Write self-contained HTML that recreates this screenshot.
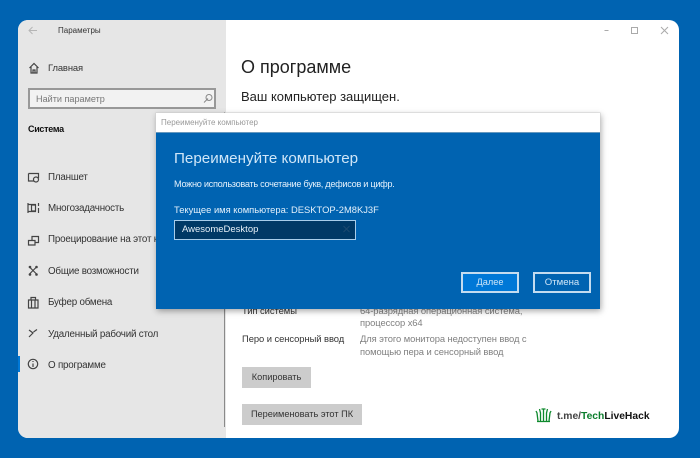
<!DOCTYPE html>
<html><head><meta charset="utf-8">
<style>
html,body{margin:0;padding:0;width:700px;height:458px;overflow:hidden;background:#0063b1}
body{position:relative;font-family:"Liberation Sans","DejaVu Sans",sans-serif}
#r{position:absolute;left:0;top:0;width:700px;height:458px;filter:blur(.3px);overflow:hidden}
div,span{position:absolute;white-space:nowrap}
svg{position:absolute;overflow:visible}
.n{font-size:9.8px;letter-spacing:-.2px;color:#333;left:48px;line-height:14px}
.i{fill:none;stroke:#444;stroke-width:1.2}
.s{font-size:9.4px;letter-spacing:-.08px;color:#808080;line-height:13px;left:360px}
.l{font-size:9.4px;letter-spacing:-.05px;color:#333;line-height:13px;left:242px}
.b{background:#ccc;color:#333;font-size:9.2px;text-align:center;left:242px;height:21px;line-height:21px}
</style></head><body><div id="r">
<div id="w" style="left:18px;top:20px;width:661px;height:418px;background:#fff;border-radius:10px;overflow:hidden">
 <div style="left:0;top:0;width:208px;height:418px;background:#e6e6e6"></div>
</div>
<div style="left:224px;top:112px;width:1px;height:315px;background:#8a8a8a"></div>
<svg style="left:0;top:0" width="700" height="458">
 <path d="M37 30.500H29M32.500 27L29 30.500L32.500 34" fill="none" stroke="#b5b5b5" stroke-width="1"/>
 <path d="M29.500 68L34 63.500L38.500 68M31 67V73H37V67M33 73V70H35V73" class="i"/>
 <path d="M28.500 173.500H38.500V178M28.500 173.500V181H34" class="i"/><circle cx="36" cy="179.500" r="2.500" class="i"/>
 <path d="M28 203V213M31.500 205H35.500V211H31.500ZM28 204.500H36M28 211.500H36M38.500 203V206M38.500 208V213" class="i"/>
 <path d="M28.500 240.500H35V245H28.500ZM32 240.500V236.500H38.500V242.500H35" class="i"/>
 <path d="M29 266.500L37 274.500M37 266.500L29 274.500" class="i" stroke-width="1.500"/>
 <circle cx="30" cy="267" r="1.300" fill="#444"/><circle cx="36.500" cy="267" r="1.300" fill="#444"/><circle cx="30" cy="274.500" r="1.300" fill="#444"/><circle cx="36.500" cy="274.500" r="1.300" fill="#444"/>
 <path d="M28.500 300H38V308H28.500ZM31.500 300V308M35 300V308M31 300V297.500H35.500V300" class="i"/>
 <path d="M29 330L33 333L29 337M37 329.500L33.500 332" class="i"/>
 <circle cx="33" cy="364" r="4.700" class="i"/><path d="M33 363.500V367M33 361V362" class="i"/>
 <rect x="18" y="356" width="2" height="16" fill="#0078d7"/>
 <path d="M604.500 30.500H608.500" stroke="#aaa" fill="none" stroke-width="1"/>
 <rect x="631.500" y="27.500" width="6" height="6" fill="none" stroke="#aaa"/>
 <path d="M661 27L668 34M668 27L661 34" stroke="#aaa" fill="none"/>
</svg>
<div style="left:58px;top:24px;font-size:8px;color:#333;line-height:13px">Параметры</div>
<div class="n" style="top:61px;font-size:9.4px;letter-spacing:-.1px">Главная</div>
<div style="left:28px;top:88px;width:184px;height:17px;border:2px solid #989898;background:#f2f2f2"></div>
<div style="left:36px;top:92px;font-size:9.1px;color:#777;line-height:14px">Найти параметр</div>
<svg style="left:0;top:0" width="700" height="458"><path d="M204 102.500L208 98.500" stroke="#888" fill="none"/><circle cx="209" cy="97.500" r="3" fill="none" stroke="#888"/></svg>
<div style="left:28px;top:122px;font-size:9px;letter-spacing:-.3px;font-weight:bold;color:#111;line-height:14px">Система</div>
<div class="n" style="top:171px">Планшет</div>
<div class="n" style="top:202px">Многозадачность</div>
<div class="n" style="top:233px">Проецирование на этот к</div>
<div class="n" style="top:265px">Общие возможности</div>
<div class="n" style="top:296px">Буфер обмена</div>
<div class="n" style="top:328px">Удаленный рабочий стол</div>
<div class="n" style="top:359px">О программе</div>

<div style="left:241px;top:55px;font-size:18px;color:#222;line-height:24px">О программе</div>
<div style="left:241px;top:88px;font-size:13px;color:#222;line-height:17px">Ваш компьютер защищен.</div>

<div class="l" style="top:304px">Тип системы</div>
<div class="s" style="top:304px">64-разрядная операционная система,</div>
<div class="s" style="top:316px">процессор x64</div>
<div class="l" style="top:332px">Перо и сенсорный ввод</div>
<div class="s" style="top:332px">Для этого монитора недоступен ввод с</div>
<div class="s" style="top:345px">помощью пера и сенсорный ввод</div>
<div class="b" style="top:367px;width:69px">Копировать</div>
<div class="b" style="top:404px;width:120px">Переименовать этот ПК</div>

<div style="left:156px;top:113px;width:444px;height:196px;background:#0063b1;box-shadow:1px 2px 6px rgba(0,0,0,.35)"></div>
<div style="left:156px;top:113px;width:444px;height:19px;background:#fff;border:0;box-shadow:0 0 0 .5px #ccc"></div>
<div style="left:161px;top:116px;font-size:8px;color:#999;line-height:13px">Переименуйте компьютер</div>
<div style="left:174px;top:149px;font-size:15.200px;color:#cfe6f8;line-height:19px">Переименуйте компьютер</div>
<div style="left:174px;top:177px;font-size:9.200px;letter-spacing:-.3px;color:#e3f0fb;line-height:14px">Можно использовать сочетание букв, дефисов и цифр.</div>
<div style="left:174px;top:203px;font-size:9.400px;color:#e3f0fb;line-height:14px">Текущее имя компьютера: DESKTOP-2M8KJ3F</div>
<div style="left:174px;top:220px;width:180px;height:18px;background:#003966;border:1px solid #a8cdea"></div>
<div style="left:182px;top:222px;font-size:9.500px;color:#e6f0f8;line-height:15px">AwesomeDesktop</div>
<svg style="left:0;top:0" width="700" height="458"><path d="M343.500 226L349.500 232M349.500 226L343.500 232" stroke="#1b4a70" fill="none"/></svg>
<div style="left:461px;top:272px;width:54px;height:17px;border:2px solid #c4dcf0;background:#0078d7;color:#cfe6f8;font-size:9.200px;line-height:17px;text-align:center">Далее</div>
<div style="left:533px;top:272px;width:54px;height:17px;border:2px solid #c4dcf0;background:#0063b1;color:#cfe6f8;font-size:9.600px;line-height:17px;text-align:center">Отмена</div>

<svg style="left:0;top:0" width="700" height="458"><path d="M537 421.500H550M543.500 421V409M541.500 409H545.500M540.500 421V413L539.500 409M546.500 421V413L547.500 409M538 421L537 413L536 411M549 421L550 413L551 411" fill="none" stroke="#0f8a2e" stroke-width="1.300"/></svg>
<div style="left:557px;top:410px;font-size:10.300px;font-weight:bold;line-height:14px;color:#444">t.me/<span style="position:static;color:#0a7d2c">Tech</span><span style="position:static;color:#111">LiveHack</span></div>
</div></body></html>
